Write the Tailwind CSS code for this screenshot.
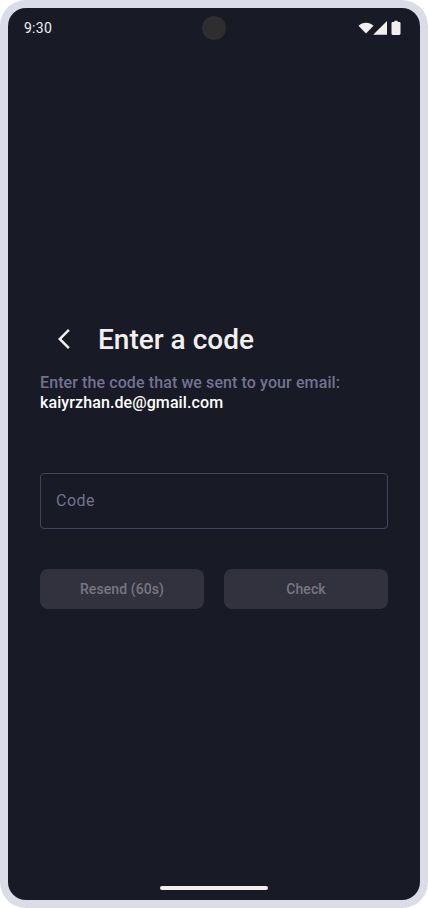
<!DOCTYPE html>
<html lang="en">
<head>
<meta charset="utf-8">
<meta name="viewport" content="width=device-width, initial-scale=1">
<title>Enter a code</title>
<script src="https://cdn.jsdelivr.net/npm/@tailwindcss/browser@4"></script>
</head>
<body class="bg-white font-['Roboto',sans-serif]">
<div class="w-[428px] h-[908px] rounded-[26px] bg-[#dadce8] p-2">
  <div class="flex h-full flex-col overflow-hidden rounded-[18px] bg-[#181a26] text-[#f2efee]">
    <header class="grid h-10 shrink-0 grid-cols-3 items-center px-4">
      <span class="text-sm leading-5 tracking-[0.25px]">9:30</span>
      <span class="size-6 justify-self-center rounded-full bg-[#2e2e2e]"></span>
      <svg class="h-4 w-[46px] justify-self-end" viewBox="0 0 46 16" fill="#f2efee" aria-label="Device status">
        <path d="M8 13.6.5 5.7C2.6 3.8 5.2 2.7 8 2.7s5.4 1.1 7.5 3Z"/>
        <path d="M15.2 14.7 29 1v13.7Z"/>
        <path d="M34.7 2.1h1.6V.8h3.4v1.3h1.6c.7 0 1.2.5 1.2 1.2v10.5c0 .7-.5 1.2-1.2 1.2h-6.6c-.7 0-1.2-.5-1.2-1.2V3.3c0-.7.5-1.2 1.2-1.2Z"/>
      </svg>
    </header>
    <main class="px-8 pt-[267px]">
      <div class="flex h-12 items-center">
        <button class="flex size-12 items-center justify-center" aria-label="Back">
          <svg class="size-6" viewBox="0 0 24 24" fill="#f2efee"><path d="M17.77 3.77 16 2 6 12l10 10 1.77-1.77L9.54 12Z"/></svg>
        </button>
        <h1 class="ml-2.5 pt-px text-[28px] leading-9 font-medium">Enter a code</h1>
      </div>
      <p class="mt-[10px] text-base leading-5 font-medium tracking-[0.1px] text-[#73738f]">Enter the code that we sent to your email:<br><span class="text-white">kaiyrzhan.de@gmail.com</span></p>
      <input aria-label="Code" placeholder="Code" class="mt-[60px] block h-14 w-full rounded border border-[#43435a] px-[15px] pb-0.5 text-base tracking-[0.5px] text-white placeholder:text-[#73738f]">
      <div class="mt-10 grid grid-cols-2 gap-5 text-sm font-medium tracking-[0.1px] text-[#777681]">
        <button class="h-10 rounded-lg bg-[#32323e]">Resend (60s)</button>
        <button class="h-10 rounded-lg bg-[#32323e]">Check</button>
      </div>
    </main>
    <div class="mx-auto mt-auto mb-[10px] h-1 w-[108px] rounded-full bg-[#f2efee]"></div>
  </div>
</div>
</body>
</html>
